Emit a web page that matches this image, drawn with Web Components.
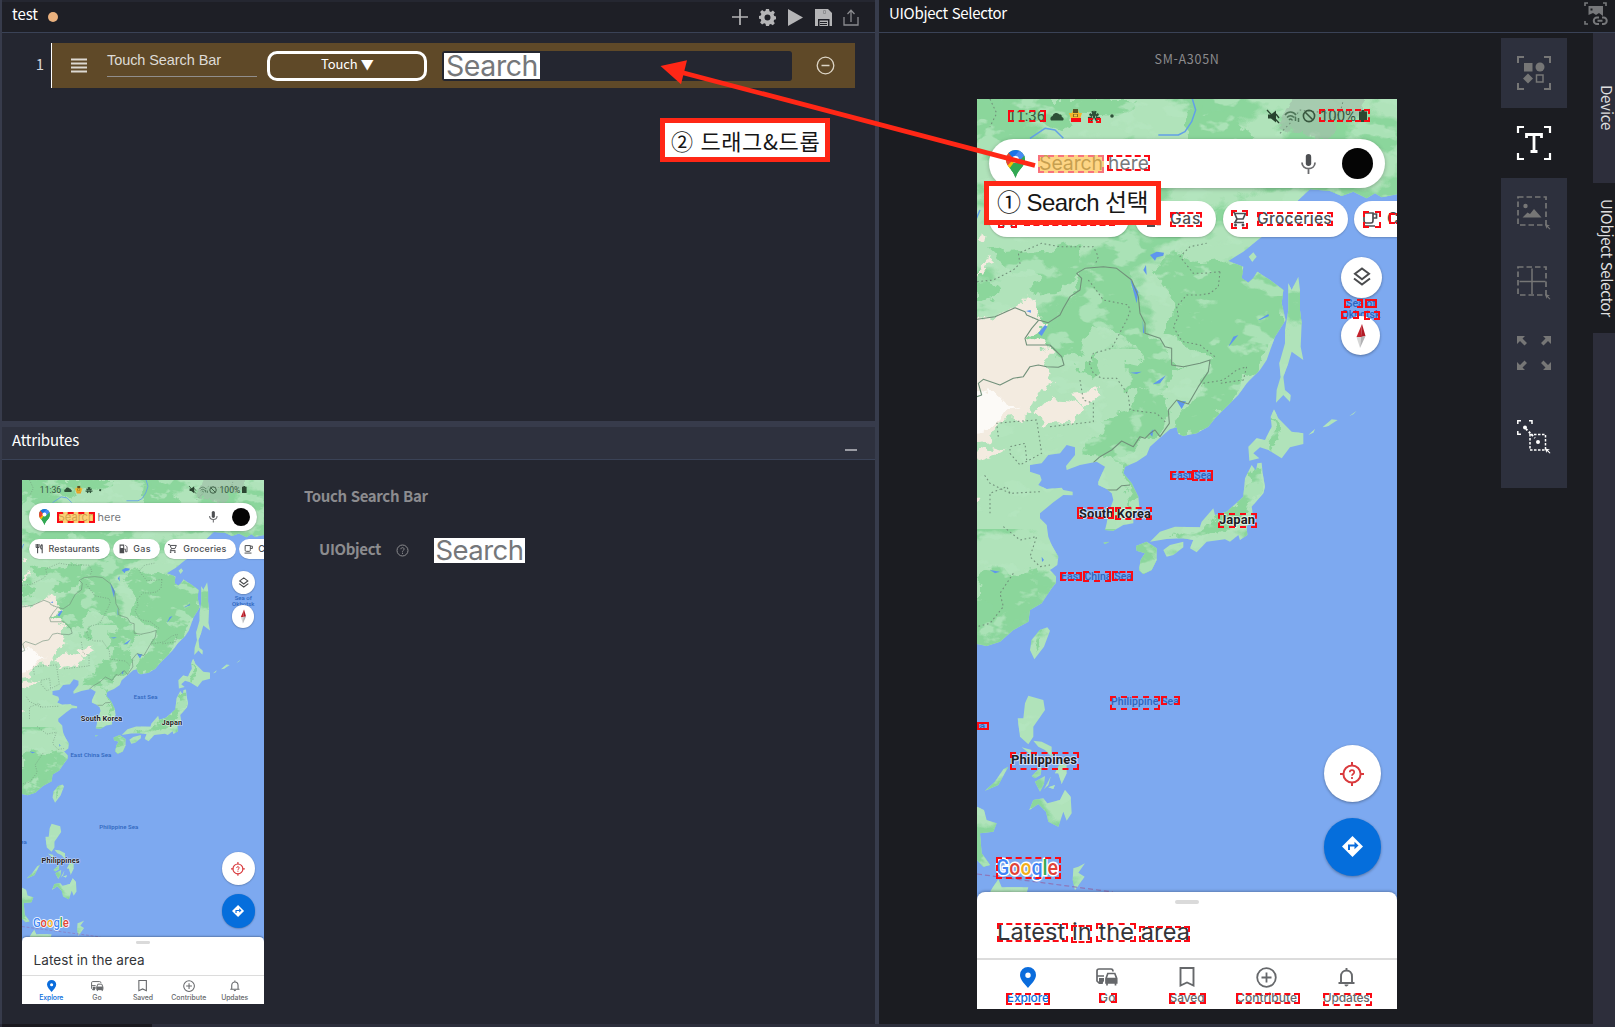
<!DOCTYPE html>
<html lang="ko">
<head>
<meta charset="utf-8">
<title>test</title>
<style>
html,body{margin:0;height:100%;background:#1b1c21;overflow:hidden}
body{font-family:"Noto Sans CJK KR","Noto Sans",sans-serif;color:#fff}
</style>
</head>
<body>
<studio-app></studio-app>
<script>
const define = (name, html, setup) => customElements.define(name, class extends HTMLElement {
  connectedCallback() {
    if (this.shadowRoot) return;
    const root = this.attachShadow({ mode: 'open' });
    const t = document.createElement('template');
    t.innerHTML = typeof html === 'function' ? html(this) : html;
    root.append(t.content.cloneNode(true));
    if (setup) setup(this, root);
  }
});

/* Single line of text, tracked so that it fills the width given in "w". */
const ruler = document.createElement('canvas').getContext('2d');
define('fit-text', `<style>:host{display:inline-block;white-space:pre;flex:none}</style><slot></slot>`, el => {
  const cs = getComputedStyle(el), w = +el.getAttribute('w'), s = el.textContent;
  ruler.font = `${cs.fontWeight} 100px ${cs.fontFamily}`;
  const size = el.hasAttribute('size') ? +el.getAttribute('size') : parseFloat(cs.fontSize);
  el.style.fontSize = size + 'px';
  if (w) {
    el.style.letterSpacing = ((w - ruler.measureText(s).width * size / 100) / [...s].length) + 'px';
    el.style.width = w + 'px';
  }
});

define('panel-header', `<style>
:host{display:flex;align-items:center;height:var(--h,30px);box-sizing:border-box;border-bottom:1px solid #3a4256;background:var(--bg,#1e1f26);padding:0 14px 0 10px;font-size:15px;flex:none}
.tools{margin-left:auto;display:flex;align-items:center;gap:0}
</style><slot></slot><div class="tools"><slot name="tools"></slot></div>`);

const icons = {
  plus: [16, 16, '<path d="M8 0v16M0 8h16" stroke="#b5b5b7" stroke-width="1.7"/>'],
  gear: [17, 17, '<path fill="#b5b5b7" fill-rule="evenodd" d="M7 0h3l.5 2.3 1.4.6 2-1.3 2 2-1.3 2 .7 1.5 1.7.4v2.8l-1.8.5-.6 1.4 1.2 2-2 2-2-1.2-1.4.6L10 17H7l-.5-2.2-1.4-.6-2 1.2-2-2 1.2-2-.6-1.4L0 9.700V7l1.800-.5.6-1.400-1.300-2 2-2 2 1.300 1.400-.6zM8.500 5.500a3 3 0 1 0 0 6a3 3 0 0 0 0-6z"/>'],
  play: [15, 17, '<path fill="#b5b5b7" d="M0 0l15 8.500L0 17z"/>'],
  save: [17, 17, '<path fill="#b5b5b7" fill-rule="evenodd" d="M0 0h2.500v6H12V0h1l4 4v13h-2.500v-7H3v7H0zM8.500 1.500h2v3h-2z"/><path fill="#b5b5b7" d="M4.500 0H12v1H4.500z"/><path d="M4.500 11.500h8.500v5.500H4.500z" fill="#b5b5b7"/><path fill="#b5b5b7" fill-rule="evenodd" d="M2 0h11v6H2zM8.500 1.500h2v3h-2z"/><path d="M5 13.500h7M5 15.500h7" stroke="#1e1f26"/>'],
  upload: [16, 17, '<path d="M1 8v8h14V8M8 13V1.500M4.500 5L8 1.300 11.500 5" fill="none" stroke="#8b8c90" stroke-width="1.300"/>'],
  shotlink: [23, 23, '<g fill="none" stroke="#77787b" stroke-width="1.600"><path d="M1 4V1h3M19 1h3v3M1 19v3h3"/><path d="M15 15.500h-2a3 3 0 0 0 0 6.500h2M18 15.500h1.500a3 3 0 0 1 0 6.500H18M13.500 18.800h5" stroke-width="2"/></g><path fill="#77787b" fill-rule="evenodd" d="M4.500 4H19v10l-4-3-3 2-3-2-4.500 2zM6.500 6.500v2h2v-2z"/>'],
  burger: [16, 15, '<path d="M0 1.500h16M0 5.500h16M0 9.500h16M0 13.500h16" stroke="#ddd9d2" stroke-width="1.800"/>'],
  remove: [19, 19, '<circle cx="9.500" cy="9.500" r="8.300" fill="none" stroke="#ddd5c6" stroke-width="1.300"/><path d="M5.500 9.500h8" stroke="#ddd5c6" stroke-width="1.500"/>'],
  minimize: [12, 2, '<path d="M0 1h12" stroke="#c9cad0" stroke-width="1.400"/>'],
  help: [13, 13, '<circle cx="6.500" cy="6.500" r="5.500" fill="none" stroke="#8b8b8e"/><path d="M4.900 5.200c0-2.100 3.200-2.100 3.200 0c0 1.200-1.600 1.100-1.600 2.500M6.500 8.700v1.200" fill="none" stroke="#8b8b8e"/>'],
  shapes: [34, 34, '<g fill="none" stroke="#767676" stroke-width="2"><path d="M1 7V1h6M27 1h6v6M1 27v6h6M27 33h6v-6" /><path d="M19.500 19h6.500v7h-6.500z" stroke-width="1.500"/></g><g fill="#767676"><path d="M7 7h8.500v8.500H7zM11 17.500l5 5-5 5-5-5z"/><circle cx="23" cy="11" r="4.500"/></g>'],
  text: [34, 34, '<path d="M1 7V1h6M27 1h6v6M1 27v6h6M27 33h6v-6" fill="none" stroke="#fff" stroke-width="2.200"/><path d="M9.500 12V8.500h15V12M17 8.500v17M13.500 25.500h7" fill="none" stroke="#fff" stroke-width="2.800"/>'],
  image: [34, 34, '<path d="M1 1h28v28H1z" fill="none" stroke="#767676" stroke-width="1.700" stroke-dasharray="5.500 3"/><g fill="#767676"><circle cx="8.500" cy="10" r="2.200"/><path d="M5.500 21.500l5-5 2.500 1.500 4-5 7.500 8.500zM28 28l5 1.500-2 .8 2.500 2.700-.8.600-2.700-2.600-.6 2z"/></g>'],
  grid: [34, 34, '<path d="M1 1h28v28H1z" fill="none" stroke="#767676" stroke-width="1.700" stroke-dasharray="5.500 3"/><path d="M15 2.500v25.500M2.500 15.500h26" stroke="#767676" stroke-width="1.500"/><path fill="#767676" d="M28 28l5 1.500-2 .8 2.500 2.700-.8.600-2.700-2.600-.6 2z"/>'],
  expand: [34, 34, '<g fill="#767676"><path id="a" d="M0 0h8L5.500 2.500 10 7 7.500 9.500 3 5 0 8z"/><path d="M34 0v8l-3-3-4.500 4.500L24 7l4.500-4.500L26 0z"/><path d="M0 34v-8l3 3 4.500-4.500L10 27l-4.500 4.500L8 34z"/><path d="M34 34h-8l2.500-2.500L24 27l2.500-2.500L31 29l3-3z"/></g>'],
  drag: [34, 34, '<g fill="none" stroke="#fff" stroke-width="1.500"><path d="M.8 4V.8H4M12 .8h3V4M.8 11v3.200H4"/><path d="M13 14.500h15.500v15.500H13z" stroke-dasharray="2.500 1.500"/><path d="M9 9l9 9" stroke-dasharray="2 2" stroke-width="2"/></g><g fill="#fff"><circle cx="8" cy="7.500" r="2"/><circle cx="21" cy="22" r="2"/><path d="M28 28.500l5 1-2 .8 2.500 2.700-.8.600-2.700-2.600-.6 2z"/></g>'],

  cloud: [14, 9, '<path fill="#2d5037" d="M1 8.500A2.800 2.800 0 0 1 2.500 4a4 4 0 0 1 7-1.500C12 2.500 12 4.500 11.700 5c2 .2 2.700 2.800 1 3.500z"/>'],
  buds: [13, 14, '<path fill="#f2b82c" d="M0 4h3L4 1h5l1 3h3l-2 6H2z"/><path fill="#585427" d="M4 0h5v4H4z"/><path fill="#8a6a1c" d="M4 5h5v3H4z"/><path fill="#f5c94b" d="M5 5.500h3v2H5z"/><path fill="#e8a024" d="M2 9h9l-1 4H3z"/>'],
  flower: [14, 14, '<g fill="none" stroke="#2d5037" stroke-width="2.200"><path d="M1 9l4-.5M2.500 5l3 2M5.500 2l1 4M8.500 2l-1 4M11.500 5l-3 2M13 9l-4-.5M4 12l2-3M10 12L8 9M7 5v4"/></g>'],
  dot: [4, 4, '<circle cx="2" cy="2" r="1.800" fill="#2d5037"/>'],
  mute: [12, 13, '<path fill="#28442f" d="M1 4.500h3l5-4v12l-5-4H1z"/><path d="M0 0l12 13M9 4l3 4" stroke="#28442f" stroke-width="1.300"/>'],
  wifi: [16, 13, '<g fill="none" stroke="#4e7658" stroke-width="1.500"><path d="M1 5c3-4 8-4 11 0M3 7.500c2-2.500 5-2.500 7 0M5 10c1-1.200 2-1.200 3 0M11.500 7v4M14.500 12V8"/></g>'],
  block: [14, 14, '<g fill="none" stroke="#38573f" stroke-width="1.600"><circle cx="7" cy="7" r="5.600"/><path d="M3 3l8 8"/></g>'],
  battery: [8, 12, '<path fill="#2c4732" d="M2.500 0h3v1.500H8V12H0V1.500h2.500z"/>'],
  gpin: [19, 28, '<defs><clipPath id="c"><path d="M9.500 0A9.500 9.500 0 0 0 0 9.500C0 17 7 19 9.500 28C12 19 19 17 19 9.500A9.500 9.500 0 0 0 9.500 0z"/></clipPath></defs><g clip-path="url(#c)"><path fill="#32a853" d="M0 0h19v28H0z"/><path fill="#fabb05" d="M0 21L0 12 9 3v8l-6 8z"/><path fill="#e94335" d="M0 0L8 9 0 17z"/><path fill="#1a73e8" d="M2 2L7 8 16 0H4z"/><path fill="#4689f3" d="M6.500 8L14 0h5v6l-8 8z"/><path fill="#32a853" d="M19 5l-9 9-7 8 7 6 9-10z"/></g><circle cx="9.500" cy="9.500" r="3.400" fill="#fff"/>'],
  mic: [15, 20, '<rect x="4.800" y="0" width="5.400" height="12" rx="2.700" fill="#4d4f52"/><path d="M1 8.500c0 8.200 13 8.200 13 0M7.500 15v5" fill="none" stroke="#6a6b6e" stroke-width="1.800"/>'],
  fork: [15, 16, '<path d="M2 0v6M4.500 0v16M7 0v6M2 6h5M12.500 16V1M12 1c-3 1-3 8 0 8" fill="none" stroke="#4c4e51" stroke-width="1.900"/>'],
  pump: [15, 16, '<path fill="#4c4e51" fill-rule="evenodd" d="M1 1h8v15H1zM2.800 3v4h4.500V3z"/><path d="M9 9h2.500v4.500H14V5l-3-3" fill="none" stroke="#4c4e51" stroke-width="1.500"/>'],
  cart: [15, 16, '<path d="M0 1h3l3 7h6l2.500-5.500H4M6 8l-2 3.500h9" fill="none" stroke="#4c4e51" stroke-width="1.700"/><circle cx="4.500" cy="14" r="1.500" fill="#4c4e51"/><circle cx="12" cy="14" r="1.500" fill="#4c4e51"/>'],
  cup: [16, 15, '<path d="M2 1h9v7c0 3-1 3-2 3H4C3 11 2 11 2 8zM11 2h3.500v4H11M1 14h12" fill="none" stroke="#4c4e51" stroke-width="1.700"/>'],
  layers: [20, 20, '<path d="M10 1.500l7 5.300-7 5.400-7-5.400zM2 11.500l8 6 8-6" fill="none" stroke="#4a4b4d" stroke-width="2"/>'],
  needle: [12, 26, '<path fill="#c3222c" d="M7 1L6 14H1.500z"/><path fill="#b01a26" d="M7 1l3.500 12L6 14z"/><path fill="#d6d6d6" d="M1.500 14H6L5 25z"/><path fill="#b1b1b3" d="M10.500 13L6 14 5 25z"/>'],
  locate: [24, 24, '<g fill="none" stroke="#d93a3d" stroke-width="2"><circle cx="12" cy="12" r="8.600" /><path d="M12 0v4M12 20v4M0 12h4M20 12h4"/><path stroke-width="1.700" d="M9.800 10.300c0-3 4.400-3 4.400 0c0 1.800-2.200 1.500-2.200 3.500M12 15v2"/></g>'],
  route: [21, 21, '<path fill="#fff" d="M10.500 0L21 10.500 10.500 21 0 10.500z"/><path d="M7 14v-4.500h6" fill="none" stroke="#0a6cdc" stroke-width="2"/><path fill="#0a6cdc" d="M12.500 5.800l4 3.700-4 3.700z"/>'],
  explore: [16, 21, '<path fill="#0a6cdc" fill-rule="evenodd" d="M8 0a8 8 0 0 0-8 8c0 5 5 9 8 13c3-4 8-8 8-13a8 8 0 0 0-8-8zm0 5.500a2.700 2.700 0 1 1 0 5.400a2.700 2.700 0 0 1 0-5.400z"/>'],
  go: [22, 18, '<g fill="none" stroke="#66686b" stroke-width="1.700"><path d="M7 15H3L1 13V3c0-1 .5-2 2-2h12c2 0 2 1 2 2.500M1 8h7"/><path d="M10 10.500l1.800-5h7l1.900 5V15H10zM10 10.500h10.500M11 15v2.500M19.500 15v2.500"/></g><path fill="#66686b" d="M3 10h5v3l-2 3H3zM10 10.500h10.500V15H10z"/>'],
  saved: [16, 20, '<path d="M1.500 1h13v17.500L8 15.500l-6.500 3z" fill="none" stroke="#66686b" stroke-width="1.900"/>'],
  contribute: [21, 21, '<g fill="none" stroke="#66686b" stroke-width="1.800"><circle cx="10.500" cy="10.500" r="9.300"/><path d="M10.500 5.500v10M5.500 10.500h10"/></g>'],
  updates: [17, 20, '<path d="M3 15.500V9.500c0-8 11-8 11 0v6M.5 16h16M8.500 1v2" fill="none" stroke="#66686b" stroke-width="1.900"/><path fill="#66686b" d="M6.500 17.500h4c0 2-4 3-4 0z"/>']
};
define('ui-icon', el => {
  const [w, h, body] = icons[el.getAttribute('name')];
  return `<style>:host{display:block;flex:none;width:${w}px;height:${h}px}svg{display:block;overflow:visible}</style><svg width="${w}" height="${h}" viewBox="0 0 ${w} ${h}">${body}</svg>`;
});

/* Snippet of the phone screen: the recognised word. */
define('word-image', `<style>
:host{display:flex;align-items:center;justify-content:center;background:#fff;color:#75777a;font-family:Inter,sans-serif;font-weight:400;box-sizing:border-box;line-height:26px}
</style><slot></slot>`);

define('step-row', `<style>
:host{display:flex;height:45px;align-items:center}
.no{width:49px;box-sizing:border-box;padding:0 7px 4px 0;text-align:right;font-size:15px;color:#d5d5d8;flex:none}
.body{display:flex;align-items:center;width:804px;height:45px;box-sizing:border-box;background:#5f4928;border-left:1px solid #fff}
ui-icon[name=burger]{margin-left:19px}
.name{margin-left:20px;width:150px;height:25px;margin-top:-4px;border-bottom:1px solid #918e8c;font:14.500px/18px "Liberation Sans",sans-serif;color:#dedbd6}
.select{margin-left:10px;width:160px;height:30px;box-sizing:border-box;border:3px solid #fff;border-radius:10px;display:flex;align-items:center;justify-content:center;color:#fff;line-height:20px}
.select fit-text{margin:-4px 0 0 0}
.field{margin-left:15px;width:350px;height:30px;box-sizing:border-box;padding:2px;background:#242630;border-radius:3px}
word-image{width:96px;height:26px}
ui-icon[name=remove]{margin-left:24px}
</style>
<div class="no">1</div>
<div class="body"><ui-icon name="burger"></ui-icon>
<div class="name"><fit-text w="114" size="14.500">Touch Search Bar</fit-text></div>
<div class="select"><fit-text w="52" size="13">Touch ▼</fit-text></div>
<div class="field"><word-image><fit-text w="92" size="28.500">Search</fit-text></word-image></div>
<ui-icon name="remove"></ui-icon></div>`);

define('map-canvas', `<style>:host{display:block}svg{display:block}text{font-family:Roboto,sans-serif}
.c{font-weight:700;font-size:13px;fill:#1d2025;stroke:#fff;stroke-opacity:.6;stroke-width:2px;paint-order:stroke;stroke-linejoin:round}
.s{font-size:10.500px;fill:#2f66bd;font-weight:500}
.g{font-family:Inter,sans-serif;font-size:22px;font-weight:500;stroke:#fff;stroke-width:3px;paint-order:stroke;stroke-linejoin:round}</style>
<svg width="420" height="910" viewBox="0 0 420 910">
<defs>
<clipPath id="land">
<path transform="translate(-7,241) scale(.33333)" d="M21-723H1281V-437L1235-428 1215-440 1190-425 1150-445 1115-432 1080-447 1020-452 985-420 950-370 910-330 870-305 820-265 775-237 820-220 815-185 835-172 850-185 862-205 900-180 940-150 935-110 947-60 915-10 890 60 870 90 830 130 805 165 770 200 735 235 715 260 680 280 640 288 625 282 620 262 600 268 570 293 540 320 530 345 500 365 465 380 460 400 485 430 505 470 508 500 490 530 490 550 460 555 430 572 405 570 410 550 415 520 430 480 425 460 410 447 385 435 385 425 405 380 380 365 330 375 290 390 288 378 315 345 315 322 290 315 270 340 235 345 215 370 180 375 180 395 210 405 215 420 205 435 230 447 275 443 280 450 308 455 308 466 280 465 250 487 210 520 210 535 230 555 235 590 245 615 265 650 262 675 240 690 258 710 258 728 245 745 215 790 180 810 175 845 130 870 90 905 50 918 21 912Z"/>
<path transform="translate(-7,241) scale(.33333)" d="M836-250L850-263 860-250 847-235Z M955-170L965-150 985-190 990-150 990-90 995-50 992 20 1000 60 965 35 955 70 940 110 945 150 962 165 960 185 940 165 918 188 920 150 932 110 928 70 945 10 945-30 955-90Z M912 208L925 235 965 275 1000 280 1000 312 960 322 935 355 895 330 870 322 850 340 868 355 838 362 835 320 860 295 885 300 905 260 902 230Z M845 375L858 392 862 370 875 368 878 400 885 440 880 460 845 500 850 530 830 560 832 585 810 600 805 585 780 605 765 598 710 605 680 637 660 625 670 600 640 595 590 597 540 605 570 575 615 560 690 562 695 545 730 505 735 525 770 515 820 470 825 415Z M580 630L600 615 640 605 640 622 610 645 590 650Z M498 618L530 605 560 625 560 660 545 690 520 702 507 690 512 660 525 640 500 632Z M232 862L240 872 222 920 193 958 180 930 185 900 210 870Z M400 608L418 605 405 612Z M1058 262L1085 238 1103 240 1075 258Z M1015 285L1035 267 1030 278Z M1138 228L1160 212 1150 223Z"/>
<path transform="translate(-7,551) scale(.33333)" d="M175 137L220 150 225 180 190 230 190 260 175 283 150 260 143 205 160 205 165 160Z M190 272L215 275 245 290 245 320 225 300 205 290Z M155 292L185 300 180 312Z M45 422L85 405 115 350 100 358 75 395Z M185 378L215 350 212 375 195 385Z M195 395L225 378 222 402 210 425Z M222 418L242 380 235 405Z M270 340L290 345 290 370 275 402 265 370 255 370Z M235 412L255 405 250 417Z M178 480L190 450 220 445 232 460 270 450 285 420 302 440 305 490 290 512 280 485 265 530 235 515 228 485 205 462Z M21 470L42 480 50 510 80 520 70 545 30 550 35 610 60 645 40 650 21 630Z M310 655L325 650 345 640 325 668 344 680 315 720 308 690Z M62 722L85 687 95 712 175 712 170 730 60 730Z"/>
</clipPath>
<filter id="patch" x="0" y="0" width="100%" height="100%" color-interpolation-filters="sRGB"><feTurbulence type="fractalNoise" baseFrequency=".011 .018" numOctaves="5" seed="11"/><feColorMatrix values="0 0 0 0 .545  0 0 0 0 .839  0 0 0 0 .61  14 0 0 0 -7.100"/></filter>
<filter id="flecks" x="0" y="0" width="100%" height="100%" color-interpolation-filters="sRGB"><feTurbulence type="fractalNoise" baseFrequency=".03 .05" numOctaves="4" seed="4"/><feColorMatrix values="0 0 0 0 .71  0 0 0 0 .9  0 0 0 0 .75  0 12 0 0 -7"/></filter>
<filter id="rough" x="-5%" y="-5%" width="110%" height="110%"><feTurbulence type="fractalNoise" baseFrequency=".05" numOctaves="4" seed="3"/><feDisplacementMap in="SourceGraphic" scale="24" xChannelSelector="R" yChannelSelector="G"/></filter>
</defs>
<rect width="420" height="910" fill="#7da9f0"/>
<g clip-path="url(#land)">
<rect width="420" height="910" fill="#b0e3ba"/>
<rect width="420" height="250" fill="#8bd69b" filter="url(#patch)"/>
<rect y="430" width="420" height="370" fill="#8bd69b" filter="url(#patch)"/>
<g filter="url(#rough)">
<g transform="translate(-7,241) scale(.33333)" fill="#8bd69b">
<path d="M21-723H500L440-680 350-690 260-640 140-650 60-600 21-610Z M660-680L760-690 850-610 760-560 650-590Z M21-160L90-170 80-130 21-110Z M60-260L180-270 330-290 340-220 300-160 180-140 220-200 120-210Z M320-220L400-225 480-210 500-150 520-40 560 0 600 30 600 80 640 85 560 110 500 20 420-40 340-10 320 40 270 60 220 10 250-40 300-100 330-150Z M600-270L680-230 780-240 860-190 950-150 940-40 900 30 870 90 820 130 770 200 720 260 640 290 620 240 660 200 700 130 720 60 640 0 580-20 610-100 560-170Z M470 60L560 70 600 130 560 160 470 140Z M330 60L380 40 370 110 330 100Z M590 170L600 250 560 290 470 330 440 340 470 400 500 470 490 520 480 450 440 390 420 350 330 340 360 300 420 270 400 230 480 220 500 150 560 160Z M850 380L880 380 880 450 800 550 700 590 600 590 690 565 790 500Z M910 230L930 300 900 340 890 300Z M540 640L550 640 545 700 520 690Z"/>
<path d="M60 690L150 700 200 690 180 740 230 740 130 850 60 860 50 790 21 780 21 720Z M200 880L232 870 200 950Z"/>
</g></g>
<rect width="420" height="910" fill="#bde8c5" filter="url(#flecks)" opacity=".75"/>
<g filter="url(#rough)"><g transform="translate(-7,241) scale(.33333)">
<path fill="#f3ebe0" d="M-20-60L75-68 135-97 165-115 190-120 185-90 205-65 235-62 230-50 175-10 215 0 240 30 230 50 250 80 240 110 255 130 200 170 190 200 200 220 160 240 90 250 60 300-20 315Z M205 210L240 180 310 185 340 215 310 225 315 255 260 240 210 250Z M305 155L395 145 400 165 355 180 325 200Z M21 340L70 310 105 320 80 335 21 355Z M21-210L65-235 60-215 21-195Z M25-300L60-325 55-290Z M21 470L35 470 30 500 21 490Z"/>
<path fill="#fcfaf7" d="M-20 165L50 125 80 150 120 190 142 220 90 235 50 270-20 280Z"/>
</g></g>
<g transform="translate(-7,241) scale(.33333)" fill="#5e96ee"><path d="M205-20L225-45 232-40 215-12Z M540-255L560-265 582-262 580-253 560-248 555-238Z M480-185L505-145 500-110Z M865-60L895-78 897-72 870-60Z M775 20L790-10 805-15 785 10Z M620 182L648 184 635 207Z M548 133L588 106 570 130Z M480 98L515 95 500 102Z M168-87L182-90 183-82Z M538 280L550 268 547 290Z M518-60L523-22 519-20Z M60 690L90 695 75 700Z M215 650L222 660 216 666Z M520-210L528-225 530-195Z"/></g>
<g transform="translate(-7,-9) scale(.33333)" fill="none" stroke="#62a0e8" stroke-width="4.500" stroke-linejoin="round"><path d="M665 20L677 60 665 95 645 125 625 135 565 135M180 145L225 115 255 120 280 145M0 430L30 360"/></g>
<g filter="url(#rough)"><path transform="translate(-7,-9) scale(.33333)" fill="#a2c0aa" opacity=".7" d="M960 10H1180L1150 80 1100 90 1080 150 1040 150 1000 110 960 120 930 90Z"/></g>
<g transform="translate(-7,241) scale(.33333)" fill="none" stroke="#71907a" stroke-width="3.200" stroke-linejoin="round">
<path d="M21-62L75-70 135-97 165-85 170-75 205-60 235-52 270-75 280-95 300-130 330-150 335-185 320-200 345-215 400-220 440-215 485-180 505-130 510-80 525-50 525-20 570-5 585 20 605 25 605 75 640 80 690 70 720 60 715 95 685 140 655 192 620 180 595 210 598 250 570 290 555 270 540 280 525 295 510 290 490 320 455 303 425 330 390 350 370 368 M21 170L35 165 25 130 40 118 90 135 130 115 160 110 180 80 205 75 230 80 265 82 282 75 275 50 240 15 170 15 165-5 185-35 205-58 M400 450L440 450 455 437 480 435"/>
<g stroke-dasharray="5 8"><path d="M21-175L70-180 130-210 150-230 145-260 215-290 270-280 370-280 385-250 375-225 M355-180L375-155 400-120 475-105 480-85 470-60 425 25 370 40 358 70 M620-100L625-70 610-40 630-5 640 5 690 15 735 50 M750-205L745-160 720-140 690-135 650-135 620-100 M750-205L700-200 670-200 630-250 660-280 710-290 M358 70L370 100 395 115 440 115 475 165 480 210 560 220 590 250 M330 120L340 180 370 190 370 245 240 260 M85 290L80 250 130 245 200 240 215 340 150 375 120 340 120 320 165 310 170 360 M120 460L60 430 40 400 M60 520L60 460 110 440 120 460 210 455 M100 560L150 600 200 590 180 650 210 680 240 675 M130 700L90 760 100 800 60 850 21 860 M700 130L760 120 800 90 830 80 820 120 750 130 M60-723L80-680 60-640 M930-620L960-650 990-690 1080-680 M1080-660L1110-680 1120-720"/></g></g>
</g>
<path d="M0 775L136 793" stroke="#8d78ba" stroke-width="1.200" stroke-dasharray="5 3"/>
<text class="s" text-anchor="middle" x="384" y="208">Sea of</text><text class="s" text-anchor="middle" x="384" y="219">Okhotsk</text>
<text class="s" x="194" y="380" textLength="41">East Sea</text>
<text class="c" x="102" y="419" textLength="72">South Korea</text><text class="c" x="242" y="424.500" textLength="36">Japan</text>
<text class="s" x="84" y="481" textLength="71">East China Sea</text><text class="s" x="134" y="606" textLength="68">Philippine Sea</text>
<text class="c" x="34" y="665" textLength="66">Philippines</text><text class="s" x="-3" y="631">ea</text>
<g class="g"><text x="19" y="775.500" textLength="62" lengthAdjust="spacingAndGlyphs"><tspan fill="#4285f4">G</tspan><tspan fill="#e04338">o</tspan><tspan fill="#f2ae1b">o</tspan><tspan fill="#4285f4">g</tspan><tspan fill="#34a853">l</tspan><tspan fill="#e04338">e</tspan></text></g>
</svg>`);

define('round-button', el => `<style>:host{position:absolute;display:flex;align-items:center;justify-content:center;border-radius:50%;background:#fff;box-shadow:0 1px 3px #0005}</style><slot></slot>`, el => {
  const [x, y, r] = el.getAttribute('at').split(',').map(Number);
  Object.assign(el.style, { left: x - r + 'px', top: y - r + 'px', width: 2 * r + 'px', height: 2 * r + 'px' });
});
define('place-chip', `<style>:host{display:flex;align-items:center;box-sizing:border-box;height:36px;flex:none;border-radius:18px;background:#fff;box-shadow:0 1px 2px #0003;padding-left:8px;gap:9px;font-weight:500}</style><slot></slot>`);
define('nav-item', `<style>:host{display:flex;flex-direction:column;align-items:center;width:79.600px;color:#66686b;font-weight:500}.i{height:27.500px;display:flex;align-items:center}</style><div class="i"><slot name="icon"></slot></div><slot></slot>`);

define('phone-screen', `<style>
:host{display:block;position:relative;width:420px;height:910px;overflow:hidden;font-family:Inter,sans-serif;line-height:1.200;color:#4c4e51}
map-canvas{position:absolute;inset:0}
.ui{position:relative;height:910px;display:flex;flex-direction:column}
.status{display:flex;align-items:center;height:34px;padding-left:31px;font-family:Roboto,sans-serif;color:#38573f}
.search{display:flex;align-items:center;margin:6px 12px 0;height:49px;border-radius:25px;background:#fff;box-shadow:0 1px 4px #0004;color:#77797c;flex:none}
.search fit-text{margin-top:1px}
.avatar{width:31px;height:31px;border-radius:50%;background:#050505;margin-left:26px}
.chips{display:flex;margin:13px 0 0 12px;height:36px}
.sheet{margin-top:auto;height:117.500px;background:#fff;border-radius:8px 8px 0 0;box-shadow:0 -1px 3px #0004;flex:none;display:flex;flex-direction:column;color:#333538}
.handle{width:24px;height:4px;border-radius:2px;background:#dadada;margin:8px auto 0}
.title{margin:14px 0 0 20px;height:40px}
nav{display:flex;border-top:2.500px solid #dcdcdc;padding:4px 0 0 11px}
</style>
<map-canvas></map-canvas>
<div class="ui">
<div class="status"><fit-text w="37" size="15">11:36</fit-text><ui-icon name="cloud" style="margin-left:5px"></ui-icon><ui-icon name="buds" style="margin-left:5px"></ui-icon><ui-icon name="flower" style="margin-left:5px"></ui-icon><ui-icon name="dot" style="margin-left:9px"></ui-icon>
<ui-icon name="mute" style="margin-left:153px"></ui-icon><ui-icon name="wifi" style="margin-left:5px"></ui-icon><ui-icon name="block" style="margin-left:2px"></ui-icon><fit-text w="36" size="15" style="margin-left:4px">100%</fit-text><ui-icon name="battery" style="margin-left:3px"></ui-icon></div>
<div class="search"><ui-icon name="gpin" style="margin-left:17px"></ui-icon><fit-text w="64" size="19.500" style="margin-left:14px">Search</fit-text><fit-text w="41" size="19" style="margin-left:5px">here</fit-text><ui-icon name="mic" style="margin-left:152px"></ui-icon><div class="avatar"></div></div>
<div class="chips"><place-chip style="width:140px;padding-left:10px"><ui-icon name="fork"></ui-icon><fit-text w="89" size="15.500">Restaurants</fit-text></place-chip>
<place-chip style="width:81px;margin-left:6px;padding-left:11px"><ui-icon name="pump"></ui-icon><fit-text w="31" size="15.500">Gas</fit-text></place-chip>
<place-chip style="width:125px;margin-left:7px;gap:11px"><ui-icon name="cart"></ui-icon><fit-text w="75" size="15.500">Groceries</fit-text></place-chip>
<place-chip style="width:110px;margin-left:6px"><ui-icon name="cup"></ui-icon><fit-text w="50" size="15.500">Coffee</fit-text></place-chip></div>
<div class="sheet"><div class="handle"></div><div class="title"><fit-text w="193" size="23.500">Latest in the area</fit-text></div>
<nav><nav-item style="color:#0a6cdc"><ui-icon slot="icon" name="explore"></ui-icon><fit-text w="42" size="12">Explore</fit-text></nav-item>
<nav-item><ui-icon slot="icon" name="go"></ui-icon><fit-text w="17" size="12">Go</fit-text></nav-item>
<nav-item><ui-icon slot="icon" name="saved"></ui-icon><fit-text w="35" size="12">Saved</fit-text></nav-item>
<nav-item><ui-icon slot="icon" name="contribute"></ui-icon><fit-text w="61" size="12">Contribute</fit-text></nav-item>
<nav-item><ui-icon slot="icon" name="updates"></ui-icon><fit-text w="47" size="12">Updates</fit-text></nav-item></nav></div>
</div>
<round-button at="384.500,178,20.500"><ui-icon name="layers"></ui-icon></round-button>
<round-button at="383.500,236.500,19.500"><ui-icon name="needle"></ui-icon></round-button>
<round-button at="375.300,674.500,28.500"><ui-icon name="locate"></ui-icon></round-button>
<round-button at="375.300,748,28.700" style="background:#056edc"><ui-icon name="route"></ui-icon></round-button>
<slot></slot>`);

/* Dashed frames around recognised text: x, y, width, height in screen pixels. */
define('text-frame', `<style>:host{position:absolute;box-sizing:border-box;border:2px dashed #fb0a14}:host([picked]){background:#fcb93499;border-color:#f9737b}:host([strong]){background:#fcb934aa}</style>`, el => {
  const [x, y, w, h] = el.getAttribute('box').split(',');
  Object.assign(el.style, { left: x + 'px', top: y + 'px', width: w + 'px', height: h + 'px' });
});

define('side-tab', `<style>:host{display:flex;align-items:center;justify-content:center;height:150px;flex:none;writing-mode:vertical-rl;line-height:16px;color:#dededf;background:#2d2e3b;box-sizing:border-box;padding-left:6px}:host([active]){background:none}</style><slot></slot>`);
define('tool-button', `<style>:host{display:flex;justify-content:center;align-items:center;height:70px;background:#2d303d}:host([active]){background:none}</style><slot></slot>`);
define('callout-label', `<style>:host{position:absolute;display:flex;align-items:center;justify-content:center;box-sizing:border-box;border:5px solid #ff2716;background:#fff;color:#161616;font-family:"Liberation Sans","Noto Sans CJK KR",sans-serif;line-height:1}</style><slot></slot>`);

define('studio-app', `<style>
:host{display:flex;flex-direction:column;position:relative;width:1615px;height:1027px;background:#1b1c21;overflow:hidden}
.work{display:flex;height:1024px}
.left{width:879px;box-sizing:border-box;border-left:2px solid #373b4b;border-right:4px solid #373c4c;display:flex;flex-direction:column;background:#242630}
.steps{height:421px;box-sizing:border-box;border-top:2px solid #252731;display:flex;flex-direction:column}
.dirty{width:10px;height:10px;border-radius:50%;background:#eab17e;margin:0 0 0 10px}
step-row{margin-top:10px}
.attrs{border-top:6px solid #373b4b;flex:1;display:flex;flex-direction:column}
.content{display:flex;padding:20px 0 0 20px;flex:1}
.mini{position:relative;width:242px;height:524px;overflow:hidden}
.mini phone-screen{zoom:.5762}
.props{margin-left:40px;color:#8c8c8f;font-weight:700}
.props>fit-text{display:block;margin-top:4px;line-height:24px}
.uio{display:flex;align-items:center;margin:29px 0 0 15px;height:26px}
.uio>fit-text{line-height:24px;margin-top:-2px}
.uio word-image{width:91px;height:25px;margin-left:25px}
.uio ui-icon{margin-left:15px}
.scroll{height:3px;background:#2c2e3b;padding-left:2px;flex:none}.scroll i{display:block;width:150px;height:3px;background:#1a191f}
.right{flex:1;display:flex;flex-direction:column;min-width:0}
.main{flex:1;display:flex;min-height:0}
.device{width:420px;margin-left:98px;display:flex;flex-direction:column;align-items:center}
.device>.model{height:66px;display:flex;align-items:center;color:#8b8b8d;box-sizing:border-box;padding-bottom:15px}
.tools{width:66px;margin:5px 0 0 104px;height:450px;background:#2d303d}
.tabs{margin-left:auto;width:22px;display:flex;flex-direction:column}.tabs i{flex:1;background:#2d2e3b}
.arrow{position:absolute;left:0;top:0;pointer-events:none}
</style>
<div class="work">
<section class="left">
<div class="steps"><panel-header style="--h:31px"><fit-text w="26" size="15" style="margin-top:-7px">test</fit-text><span class="dirty"></span>
<ui-icon slot="tools" name="plus"></ui-icon><ui-icon slot="tools" name="gear" style="margin-left:11px"></ui-icon><ui-icon slot="tools" name="play" style="margin-left:12px"></ui-icon><ui-icon slot="tools" name="save" style="margin-left:12px"></ui-icon><ui-icon slot="tools" name="upload" style="margin-left:11px;margin-right:2px"></ui-icon></panel-header>
<step-row></step-row></div>
<div class="attrs"><panel-header style="--h:33px;--bg:#2e313e"><fit-text w="67" size="15" style="margin-top:-7px">Attributes</fit-text><ui-icon slot="tools" name="minimize" style="margin:13px 4px 0 0"></ui-icon></panel-header>
<div class="content"><div class="mini"><phone-screen></phone-screen><text-frame strong box="35,32,38,11"></text-frame></div>
<div class="props"><fit-text w="122" size="15">Touch Search Bar</fit-text><div class="uio"><fit-text w="62" size="15">UIObject</fit-text><ui-icon name="help"></ui-icon><word-image><fit-text w="88" size="27.500">Search</fit-text></word-image></div></div></div>
</div>
</section>
<section class="right">
<panel-header style="--h:33px;--bg:#1b1c21;padding-right:8px"><fit-text w="117" size="15" style="margin-top:-7px">UIObject Selector</fit-text><ui-icon slot="tools" name="shotlink" style="margin-top:-6px"></ui-icon></panel-header>
<div class="main"><div class="device"><div class="model"><fit-text w="65" size="12.500">SM-A305N</fit-text></div><phone-screen id="live"></phone-screen></div>
<div class="tools"><tool-button><ui-icon name="shapes"></ui-icon></tool-button><tool-button active style="background:#1b1c21"><ui-icon name="text"></ui-icon></tool-button><tool-button><ui-icon name="image"></ui-icon></tool-button><tool-button><ui-icon name="grid"></ui-icon></tool-button><tool-button><ui-icon name="expand"></ui-icon></tool-button><tool-button style="height:98px"><ui-icon name="drag"></ui-icon></tool-button></div>
<div class="tabs"><side-tab><span style="font-size:15px;letter-spacing:-.2px">Device</span></side-tab><side-tab active><span style="font-size:15px;letter-spacing:-.3px">UIObject Selector</span></side-tab><i></i></div></div>
</section>
</div>
<div class="scroll"><i></i></div>
<callout-label style="left:660px;top:118px;width:170px;height:44px"><fit-text w="148" size="22" style="font-family:'Noto Sans CJK KR'">② 드래그&amp;드롭</fit-text></callout-label>
<callout-label style="left:984px;top:181px;width:177px;height:44px"><fit-text w="151" size="24">① Search 선택</fit-text></callout-label>
<svg class="arrow" width="1615" height="300"><path d="M1035 165.500L680 72" stroke="#ff2716" stroke-width="4.800"/><path fill="#ff2716" d="M660.500 66L687 60.300 681 84.300z"/></svg>`, (el, root) => {
  const frames = [[31,11,38,12],[94,19,10,4],[111,19,13,5],[342,10,51,13],[61,56,66,18,1],[130,56,43,16],[193,113,32,15],[254,111,17,19],[280,113,76,14],[386,112,18,17],[412,114,20,11],[21,111,19,18],[47,113,91,14],
  [367,200,19,9],[388,200,12,9],[364,212,18,8],[387,212,16,9],[193,372,23,9],[215,371,21,11],[100,408,37,12],[138,408,37,13],[241,414,39,15],[83,473,22,9],[106,472,28,11],[135,472,21,10],
  [133,597,50,14],[184,597,19,9],[0,623,12,8],[33,653,69,18],[19,758,65,22],[20,824,71,19],[94,826,21,18],[119,824,40,19],[162,827,51,16],[29,894,44,12],[122,894,18,10],[192,894,37,11],[259,894,64,11],[346,894,49,13]];
  const live = root.getElementById('live');
  for (const [x, y, w, h, picked] of frames) {
    const f = document.createElement('text-frame');
    f.setAttribute('box', [x, y, w, h].join());
    if (picked) f.setAttribute('picked', '');
    live.append(f);
  }
});
</script>
</body>
</html>
